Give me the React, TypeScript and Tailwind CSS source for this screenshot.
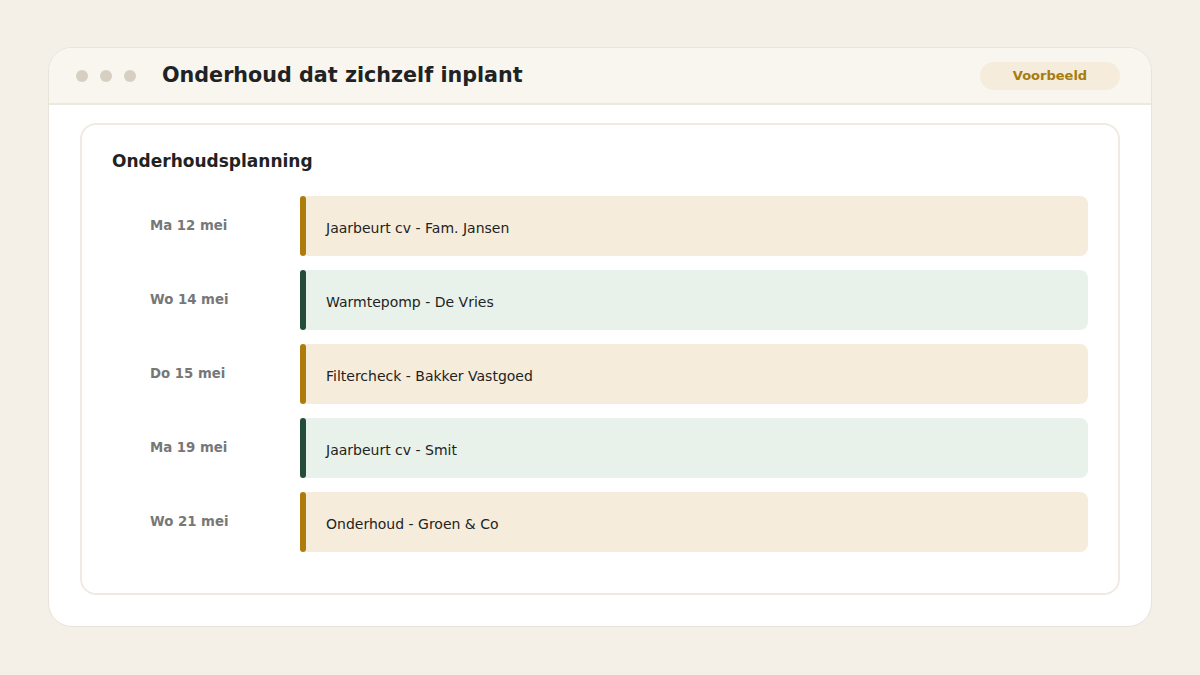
const rows = [
  { date: "Ma 12 mei", label: "Jaarbeurt cv - Fam. Jansen", tone: "gold" },
  { date: "Wo 14 mei", label: "Warmtepomp - De Vries", tone: "green" },
  { date: "Do 15 mei", label: "Filtercheck - Bakker Vastgoed", tone: "gold" },
  { date: "Ma 19 mei", label: "Jaarbeurt cv - Smit", tone: "green" },
  { date: "Wo 21 mei", label: "Onderhoud - Groen & Co", tone: "gold" },
];

export default function App() {
  return (
    <div
      className="flex h-[675px] w-[1200px] items-start justify-center bg-[#f4efe7] pt-[47px]"
      style={{ fontFamily: '"DejaVu Sans", Verdana, sans-serif' }}
    >
      <div className="w-[1104px] h-[580px] overflow-hidden rounded-[24px] border border-[#e9e4da] bg-white">
        {/* window bar */}
        <div className="flex h-[57px] items-center border-b-2 border-[#ede8de] bg-[#f9f6f0] pl-[27px] pr-[31px]">
          <div className="flex gap-[12px]">
            <span className="h-[12px] w-[12px] rounded-full bg-[#d6cfc2]" />
            <span className="h-[12px] w-[12px] rounded-full bg-[#d6cfc2]" />
            <span className="h-[12px] w-[12px] rounded-full bg-[#d6cfc2]" />
          </div>
          <h1 className="ml-[26px] pt-[1px] text-[20.7px] font-bold text-[#1f2323]">
            Onderhoud dat zichzelf inplant
          </h1>
          <span className="ml-auto flex h-[28px] w-[140px] items-center justify-center rounded-full bg-[#f5ecdb] text-[13px] font-bold text-[#a67c0e]">
            Voorbeeld
          </span>
        </div>

        {/* card */}
        <div className="px-[31px] pt-[18px]">
          <div className="h-[472px] rounded-[16px] border-2 border-[#efebe3] px-[30px] pt-[24px]">
            <h2 className="text-[17px] font-bold leading-[24px] text-[#1f2323]">
              Onderhoudsplanning
            </h2>
            <div className="mt-[23px] flex flex-col gap-[14px]">
              {rows.map((r) => (
                <div key={r.date} className="flex h-[60px] items-center">
                  <div className="w-[188px] pl-[38px] text-[13.3px] font-bold text-[#777777]">
                    {r.date}
                  </div>
                  <div
                    className={
                      r.tone === "gold"
                        ? "flex h-full flex-1 items-center rounded-[8px] bg-[#f5ecdb]"
                        : "flex h-full flex-1 items-center rounded-[8px] bg-[#e8f2ea]"
                    }
                  >
                    <span
                      className={
                        r.tone === "gold"
                          ? "h-full w-[6px] rounded-full bg-[#ae7c0b]"
                          : "h-full w-[6px] rounded-full bg-[#234d39]"
                      }
                    />
                    <span className="ml-[20px] pt-[3px] text-[14px] leading-[20px] text-[#1f2323]">
                      {r.label}
                    </span>
                  </div>
                </div>
              ))}
            </div>
          </div>
        </div>
      </div>
    </div>
  );
}
